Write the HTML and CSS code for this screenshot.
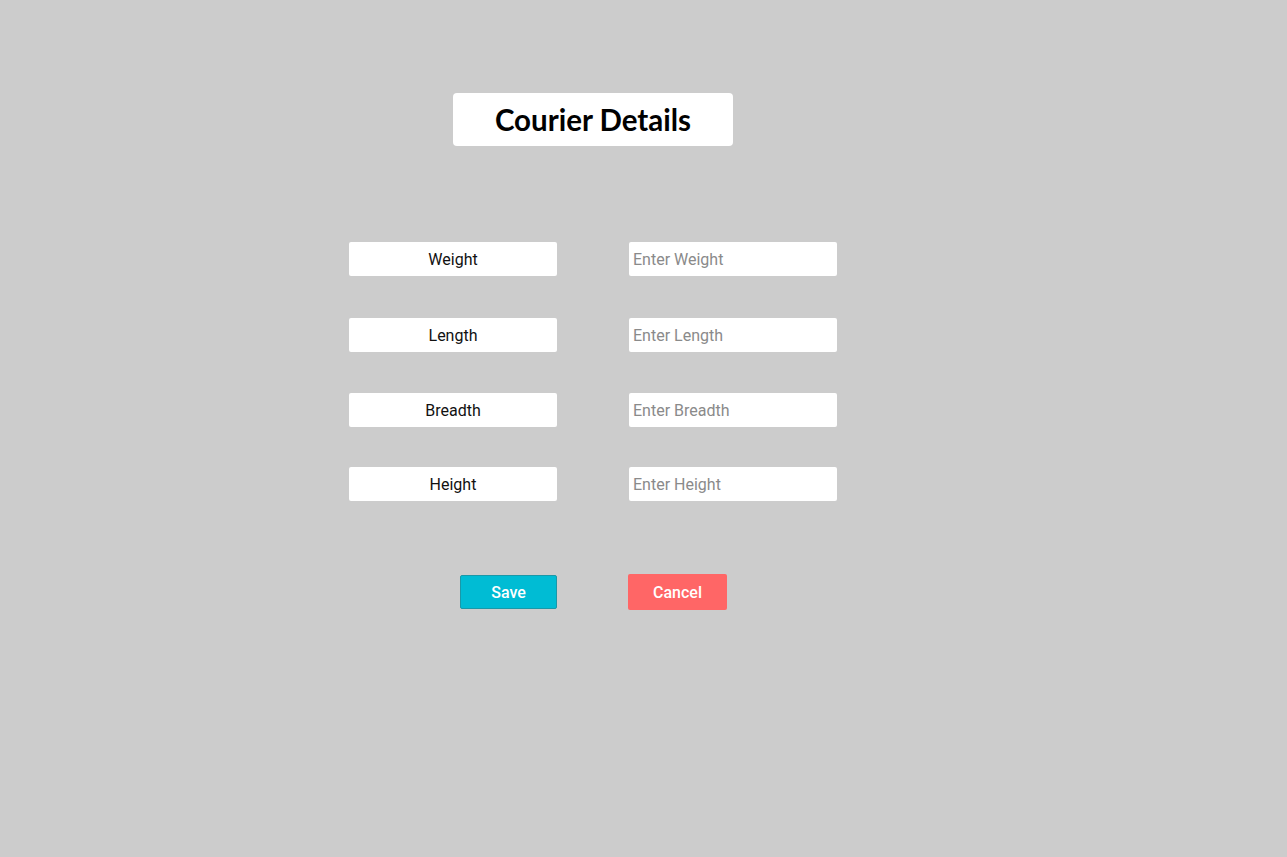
FILE: index.html
```html
<!DOCTYPE html>
<html>
<head>
<meta charset="utf-8">
<link rel="stylesheet" href="styles.css">
</head>
<body>
<div class="page">
  <div class="title">Courier Details</div>
  <div class="rows">
    <div class="row"><div class="label">Weight</div><input class="field" placeholder="Enter Weight"></div>
    <div class="row"><div class="label">Length</div><input class="field" placeholder="Enter Length"></div>
    <div class="row"><div class="label">Breadth</div><input class="field" placeholder="Enter Breadth"></div>
    <div class="row"><div class="label">Height</div><input class="field" placeholder="Enter Height"></div>
  </div>
  <div class="actions">
    <button class="btn save">Save</button>
    <button class="btn cancel">Cancel</button>
  </div>
</div>
</body>
</html>
```
FILE: styles.css
```css
html, body {
  margin: 0;
  padding: 0;
  background: #cccccc;
  height: 100%;
}
body {
  font-family: Roboto, "Liberation Sans", sans-serif;
}
.page {
  padding-top: 93px;
  padding-left: 349px;
}
.title {
  width: 280px;
  height: 53px;
  margin-left: 104px;
  background: #fff;
  border-radius: 4px;
  font-family: Lato, sans-serif;
  font-weight: 700;
  font-size: 29.5px;
  color: #000;
  display: flex;
  align-items: center;
  justify-content: center;
}
.rows {
  margin-top: 96px;
  display: flex;
  flex-direction: column;
}
.row {
  display: flex;
  gap: 72px;
  height: 34px;
}
.row:nth-child(2) { margin-top: 42px; }
.row:nth-child(3) { margin-top: 41px; }
.row:nth-child(4) { margin-top: 40px; }
.label, .field {
  box-sizing: border-box;
  width: 208px;
  height: 34px;
  background: #fff;
  border-radius: 2px;
  font-size: 16px;
}
.label {
  display: flex;
  align-items: center;
  justify-content: center;
  color: #111;
}
.field {
  border: none;
  outline: none;
  padding: 0 4px;
  font-family: Roboto, sans-serif;
  color: #111;
}
.field::placeholder {
  color: #8a8a8a;
}
.actions {
  margin-top: 73px;
  margin-left: 111px;
  display: flex;
  align-items: center;
  gap: 71px;
}
.btn {
  font-family: Roboto, sans-serif;
  font-weight: 500;
  font-size: 16px;
  color: #fff;
  border-radius: 2px;
  cursor: pointer;
  padding: 0;
}
.save {
  width: 97px;
  height: 34px;
  background: #00bcd4;
  border: 1px solid #1a98a8;
}
.cancel {
  width: 99px;
  height: 36px;
  background: #ff6666;
  border: none;
}
```
